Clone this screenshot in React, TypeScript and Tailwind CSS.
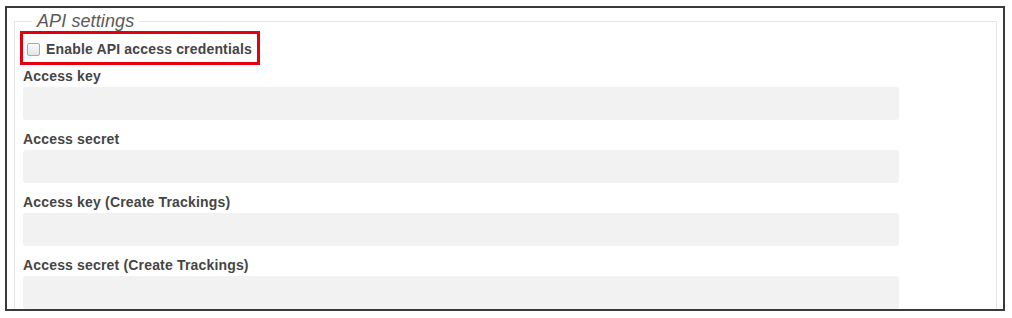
import React from "react";

const fields = [
  "Access key",
  "Access secret",
  "Access key (Create Trackings)",
  "Access secret (Create Trackings)",
];

export default function App() {
  return (
    <div
      className="w-[1012px] h-[318px] bg-white pt-[6px] pl-[5px]"
      style={{ fontFamily: '"Liberation Sans", Arial, sans-serif' }}
    >
      <div className="w-[1000px] h-[305px] border-2 border-[#3a3a3a] overflow-hidden">
        <fieldset className="mt-[3px] ml-[7px] w-[983px] border border-[#e6e6e6] pl-[8px] pb-4">
          <legend className="ml-[9px] px-[5px] text-[18px] leading-[20px] italic text-[#5a5a5a] tracking-[0.1px]">
            API settings
          </legend>
          <div className="-ml-[3px] w-[240px] h-[34px] border-[3px] border-[#e3000f] flex items-center pl-[4px] pt-[2px]">
            <span className="w-[13px] h-[13px] rounded-[2px] border border-[#a9a9a9] bg-gradient-to-b from-[#fcfcfc] to-[#e4e4e4] shrink-0" />
            <span className="ml-[6px] text-[14px] leading-[16px] font-bold text-[#454545] whitespace-nowrap tracking-[0.17px]">
              Enable API access credentials
            </span>
          </div>
          <div className="mt-[3px] flex flex-col gap-[11px]">
            {fields.map((f) => (
              <div key={f} className="flex flex-col gap-[3px]">
                <label className="text-[14px] leading-[16px] font-bold text-[#454545] tracking-[0.17px]">{f}</label>
                <div className="w-[876px] h-[33px] rounded-[3px] bg-[#f2f2f2]" />
              </div>
            ))}
          </div>
        </fieldset>
      </div>
    </div>
  );
}
